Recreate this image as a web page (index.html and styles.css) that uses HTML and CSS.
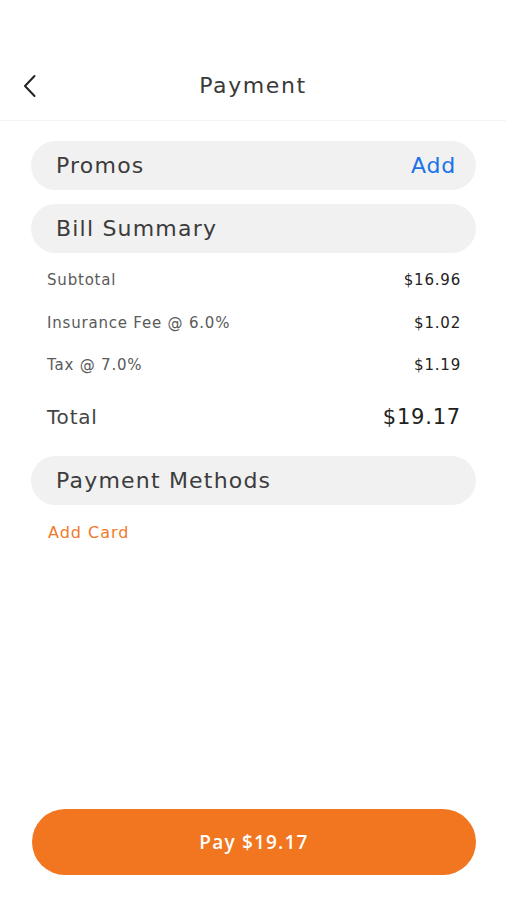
FILE: index.html
```html
<!DOCTYPE html>
<html>
<head>
<meta charset="utf-8">
<link rel="stylesheet" href="styles.css">
</head>
<body>
<div class="screen">
  <header class="header">
    <div class="bar">
      <button class="back" aria-label="Back">
        <svg width="16" height="24" viewBox="0 0 16 24"><path d="M12.5 2 L3 12 L12.5 22" fill="none" stroke="#222" stroke-width="2" stroke-linecap="round" stroke-linejoin="round"/></svg>
      </button>
      <h1 class="title">Payment</h1>
      <span></span>
    </div>
  </header>
  <main class="content">
    <div class="pill gap">
      <span class="pill-label">Promos</span>
      <span class="pill-action">Add</span>
    </div>
    <div class="pill">
      <span class="pill-label">Bill Summary</span>
    </div>
    <div class="bill">
      <div class="row"><span class="label">Subtotal</span><span class="value">$16.96</span></div>
      <div class="row"><span class="label">Insurance Fee @ 6.0%</span><span class="value">$1.02</span></div>
      <div class="row"><span class="label">Tax @ 7.0%</span><span class="value">$1.19</span></div>
      <div class="row total"><span class="label">Total</span><span class="value">$19.17</span></div>
    </div>
    <div class="pill">
      <span class="pill-label">Payment Methods</span>
    </div>
    <div class="add-card">Add Card</div>
  </main>
  <footer class="footer">
    <button class="pay">Pay $19.17</button>
  </footer>
</div>
</body>
</html>
```
FILE: styles.css
```css
* { box-sizing: border-box; }
html, body { margin: 0; padding: 0; background: #fff; }
body {
  font-family: "DejaVu Sans", "Noto Sans", sans-serif;
  color: #333;
}
.screen {
  width: 506px;
  height: 900px;
  display: flex;
  flex-direction: column;
}
.header {
  height: 121px;
  border-bottom: 1px solid #f4f4f4;
  padding-top: 62px;
}
.bar {
  height: 48px;
  display: grid;
  grid-template-columns: 1fr auto 1fr;
  align-items: center;
  padding: 0 0 0 22px;
}
.back {
  background: none;
  border: 0;
  padding: 0;
  width: 16px;
  height: 24px;
  display: flex;
  justify-self: start;
}
.title {
  margin: 0;
  font-size: 22px;
  font-weight: normal;
  letter-spacing: 1.6px;
  color: #3a3a3a;
  line-height: 26px;
  transform: translateX(-11px);
}
.content {
  padding: 20px 30px 0 31px;
  display: flex;
  flex-direction: column;
}
.pill {
  height: 49px;
  flex: none;
  background: #f1f1f1;
  border-radius: 25px;
  display: flex;
  align-items: center;
  justify-content: space-between;
  padding: 0 20px 0 25px;
}
.pill.gap { margin-bottom: 14px; }
.pill-label {
  font-size: 22px;
  letter-spacing: 1.2px;
  color: #3c3c3c;
}
.pill-action {
  font-size: 22px;
  color: #1a73e8;
  letter-spacing: 0.8px;
}
.bill {
  display: flex;
  flex-direction: column;
  padding: 0 15px 0 16px;
  margin-top: 6px;
  margin-bottom: 17px;
}
.row {
  display: flex;
  justify-content: space-between;
  align-items: center;
  height: 42.5px;
  font-size: 15px;
  letter-spacing: 0.8px;
}
.row .label { color: #5a5a5a; }
.row .value { color: #222; }
.row.total {
  height: 52px;
  font-size: 20px;
  padding-top: 8px;
}
.row.total .label { color: #444; }
.row.total .value { color: #222; font-size: 21px; }
.add-card {
  margin-top: 18px;
  padding-left: 17px;
  font-size: 16px;
  line-height: 19px;
  letter-spacing: 1px;
  color: #f07a2a;
}
.footer {
  margin-top: auto;
  padding: 0 30px 25px 32px;
}
.pay {
  width: 100%;
  height: 66px;
  border: 0;
  border-radius: 33px;
  background: #f1761f;
  color: #fff;
  font-family: "Open Sans", "DejaVu Sans", sans-serif;
  font-size: 19px;
  font-weight: 600;
  letter-spacing: 1.2px;
}
```
